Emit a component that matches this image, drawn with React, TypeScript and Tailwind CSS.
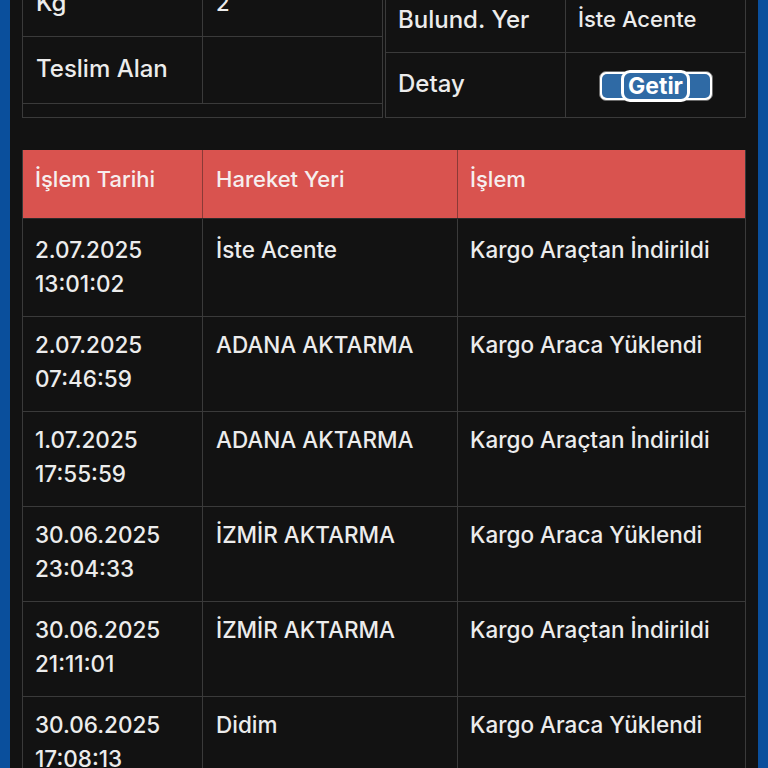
import React from 'react'

const rows = [
  { date: '2.07.2025', time: '13:01:02', place: 'İste Acente', action: 'Kargo Araçtan İndirildi' },
  { date: '2.07.2025', time: '07:46:59', place: 'ADANA AKTARMA', action: 'Kargo Araca Yüklendi' },
  { date: '1.07.2025', time: '17:55:59', place: 'ADANA AKTARMA', action: 'Kargo Araçtan İndirildi' },
  { date: '30.06.2025', time: '23:04:33', place: 'İZMİR AKTARMA', action: 'Kargo Araca Yüklendi' },
  { date: '30.06.2025', time: '21:11:01', place: 'İZMİR AKTARMA', action: 'Kargo Araçtan İndirildi' },
  { date: '30.06.2025', time: '17:08:13', place: 'Didim', action: 'Kargo Araca Yüklendi' },
]

function GetirButton() {
  return (
    <button
      type="button"
      className="flex h-[30px] w-[114px] items-center justify-center rounded-[7px] border border-[#6b6b6b] bg-white p-[2px]"
    >
      <span className="flex h-full w-full items-center justify-center rounded-[5px] bg-[#2f6aa5]">
        <span className="-my-[4px] flex h-[32px] items-center rounded-[9px] border-[3px] border-white bg-[#2f6aa5] px-[4px] text-[23px] font-bold leading-none text-white">
          Getir
        </span>
      </span>
    </button>
  )
}

export default function App() {
  return (
    <div
      className="h-[768px] w-[768px] overflow-hidden bg-[#0a4f9c] px-[10px] text-[#ececec]"
      style={{ fontFamily: 'Inter, "Noto Sans", sans-serif' }}
    >
      <div className="h-full overflow-hidden bg-[#121212] px-[12px]">
        <div className="-mt-[30px]">
          {/* üst bilgi tabloları */}
          <div className="flex items-end gap-[2px]">
            <div className="w-[361px] border-x border-[#3a3a3a] font-medium">
              <div className="flex h-[67px] border-b border-[#3a3a3a]">
                <div className="w-[180px] border-r border-[#3a3a3a] px-[13px] pt-[16px] text-[24px] leading-[34px]">Kg</div>
                <div className="flex-1 px-[13px] pt-[16px] text-[22px] leading-[34px]">2</div>
              </div>
              <div className="flex h-[67px] border-b border-[#3a3a3a]">
                <div className="w-[180px] border-r border-[#3a3a3a] px-[13px] pt-[15px] text-[24px] leading-[34px]">Teslim Alan</div>
                <div className="flex-1" />
              </div>
              <div className="h-[14px] border-b border-[#3a3a3a]" />
            </div>
            <div className="w-[361px] border-x border-b border-[#3a3a3a] font-medium">
              <div className="flex h-[64px] border-b border-[#3a3a3a]">
                <div className="w-[180px] border-r border-[#3a3a3a] px-[12px] pt-[14px] text-[24px] leading-[34px]">Bulund. Yer</div>
                <div className="flex-1 px-[12px] pt-[13px] text-[22px] leading-[34px]">İste Acente</div>
              </div>
              <div className="flex h-[64px]">
                <div className="w-[180px] border-r border-[#3a3a3a] px-[12px] pt-[14px] text-[24px] leading-[34px]">Detay</div>
                <div className="flex flex-1 items-center justify-center pt-[2px]">
                  <GetirButton />
                </div>
              </div>
            </div>
          </div>

          {/* hareket tablosu */}
          <div className="mt-[32px] border-x border-[#3a3a3a] font-medium">
            <div className="flex h-[68px] bg-[#d9534f] text-[22px] text-[#f6eeee]">
              <div className="w-[180px] border-r border-[#8a3a37] px-[12px] pt-[12px] leading-[34px]">İşlem Tarihi</div>
              <div className="w-[255px] border-r border-[#8a3a37] px-[13px] pt-[12px] leading-[34px]">Hareket Yeri</div>
              <div className="flex-1 px-[12px] pt-[12px] leading-[34px]">İşlem</div>
            </div>
            {rows.map((r, i) => (
              <div
                key={i}
                className={
                  i === 0
                    ? 'flex h-[98px] border-t border-[#2a2a2a] text-[22.5px]'
                    : 'flex h-[95px] border-t border-[#3a3a3a] text-[22.5px]'
                }
              >
                <div className={(i === 0 ? 'pt-[14px] ' : 'pt-[11px] ') + 'w-[180px] border-r border-[#3a3a3a] px-[12px] leading-[34px]'}>
                  <div>{r.date}</div>
                  <div>{r.time}</div>
                </div>
                <div className={(i === 0 ? 'pt-[14px] ' : 'pt-[11px] ') + 'w-[255px] border-r border-[#3a3a3a] px-[13px] leading-[34px]'}>
                  {r.place}
                </div>
                <div className={(i === 0 ? 'pt-[14px] ' : 'pt-[11px] ') + 'flex-1 px-[12px] leading-[34px]'}>
                  {r.action}
                </div>
              </div>
            ))}
          </div>
        </div>
      </div>
    </div>
  )
}
